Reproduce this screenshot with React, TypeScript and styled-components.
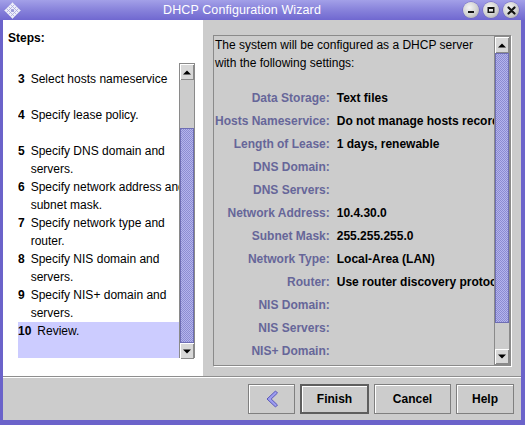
import React from "react";
import styled, { createGlobalStyle } from "styled-components";

const GlobalStyle = createGlobalStyle`
  html, body { margin: 0; padding: 0; background: #6a62c9; }
  body { font-family: "Liberation Sans", Arial, sans-serif; font-size: 12px; color: #000; }
  * { box-sizing: border-box; }
`;

const Window = styled.div`
  width: 525px;
  height: 425px;
  display: flex;
  flex-direction: column;
  background: #6b63ca;
`;

const TitleBar = styled.div`
  height: 20px;
  flex: none;
  display: grid;
  grid-template-columns: 17px 1fr auto;
  align-items: center;
  padding: 0 6px 0 4px;
  background: linear-gradient(#a3a0e8 0%, #8a85dc 45%, #7068d0 100%);
`;

const TitleText = styled.div`
  text-align: center;
  color: #fff;
  font-size: 12.5px;
  line-height: 20px;
  letter-spacing: 0.1px;
`;

const TitleButtons = styled.div`
  display: flex;
  gap: 4px;
`;

const TitleButton = styled.div`
  width: 16px;
  height: 16px;
  border-radius: 50%;
  background: radial-gradient(circle at 40% 35%, #f4f4f4 0%, #d0d0d0 55%, #9a9a9a 100%);
  box-shadow: 0 0 0 0.5px #6660b8;
  display: flex;
  align-items: center;
  justify-content: center;
`;

const Frame = styled.div`
  flex: 1;
  display: flex;
  flex-direction: column;
  padding: 0 4px 5px 3px;
  min-height: 0;
`;

const Body = styled.div`
  flex: 1;
  display: flex;
  flex-direction: column;
  background: #cccccc;
  min-width: 0;
`;

const Main = styled.div`
  height: 356px;
  flex: none;
  display: flex;
`;

const LeftPanel = styled.div`
  width: 200px;
  flex: none;
  background: #ffffff;
  padding: 10px 0 0 5px;
  display: flex;
  flex-direction: column;
`;

const StepsLabel = styled.div`
  font-weight: bold;
  line-height: 16px;
  height: 16px;
`;

const ListBox = styled.div`
  margin: 17px 0 0 10px;
  width: 177px;
  height: 295px;
  display: flex;
`;

const ListViewport = styled.div`
  flex: 1;
  min-width: 0;
  overflow: hidden;
  display: flex;
  flex-direction: column;
  justify-content: flex-end;
`;

const Item = styled.div<{ $selected?: boolean }>`
  min-height: 36px;
  flex: none;
  display: flex;
  background: ${(p) => (p.$selected ? "#ccccff" : "transparent")};
  line-height: 18px;
`;

const ItemNum = styled.span`
  font-weight: bold;
  margin-right: 6px;
  white-space: nowrap;
`;

const ItemText = styled.div`
  white-space: nowrap;
`;

const Line = styled.div`
  height: 18px;
`;

const RightPanel = styled.div`
  flex: 1;
  min-width: 0;
  display: flex;
  padding: 15px 10px 10px 10px;
`;

const TextArea = styled.div`
  flex: 1;
  min-width: 0;
  display: flex;
  border: 1px solid #8a8a8a;
  box-shadow: 1px 1px 0 #ffffff;
`;

const Content = styled.div`
  flex: 1;
  min-width: 0;
  overflow: hidden;
  padding-left: 1px;
`;

const Intro = styled.div`
  line-height: 18px;
  white-space: nowrap;
`;

const Settings = styled.div`
  margin-top: 14px;
  display: grid;
  grid-template-columns: max-content max-content;
  grid-auto-rows: 23px;
  column-gap: 7px;
  align-items: center;
`;

const SetLabel = styled.div`
  font-weight: bold;
  color: #666699;
  text-align: right;
  white-space: nowrap;
`;

const SetValue = styled.div`
  font-weight: bold;
  white-space: nowrap;
`;

const ScrollBar = styled.div`
  width: 16px;
  flex: none;
  display: flex;
  flex-direction: column;
  background: #cccccc;
  border: 1px solid #8a8a8a;
`;

const ArrowButton = styled.div<{ $h?: number }>`
  height: ${(p) => p.$h ?? 16}px;
  flex: none;
  display: flex;
  align-items: center;
  justify-content: center;
  background: #d8d8d8;
  box-shadow: inset 1px 1px 0 #ffffff, inset -1px -1px 0 #8a8a8a;
`;

const TrackGap = styled.div<{ $h: number }>`
  height: ${(p) => p.$h}px;
  flex: none;
  background: #cccccc;
`;

const Thumb = styled.div<{ $h: number }>`
  height: ${(p) => p.$h}px;
  flex: none;
  border: 1px solid #6e6eb4;
  background: repeating-conic-gradient(#b4b4ec 0 25%, #8c8cd2 0 50%) 0 0 / 2px 2px;
`;

const TrackRest = styled.div`
  flex: 1;
  background: #cccccc;
`;

const Separator = styled.div`
  height: 2px;
  flex: none;
  border-top: 1px solid #8e8e8e;
  background: #ffffff;
`;

const Footer = styled.div`
  flex: 1;
  display: flex;
  justify-content: flex-end;
  align-items: center;
  gap: 5px;
  padding-right: 7px;
`;

const Button = styled.button<{ $w: number; $default?: boolean }>`
  width: ${(p) => p.$w}px;
  height: 30px;
  padding: 0;
  display: flex;
  align-items: center;
  justify-content: center;
  font-family: "Liberation Sans", Arial, sans-serif;
  font-size: 12px;
  font-weight: bold;
  color: #000;
  background: #cccccc;
  border: ${(p) => (p.$default ? "2px solid #5e5e5e" : "1px solid #7f7f7f")};
  box-shadow: inset 1px 1px 0 #ffffff;
`;

const Arrow = ({ up }: { up?: boolean }) => (
  <svg width="8" height="5" viewBox="0 0 8 5">
    <polygon points={up ? "0,4.5 8,4.5 4,0.5" : "0,0.5 8,0.5 4,4.5"} fill="#000" />
  </svg>
);

const Scroller = ({ gap, thumb, tailH }: { gap: number; thumb: number; tailH?: number }) => (
  <ScrollBar>
    <ArrowButton>
      <Arrow up />
    </ArrowButton>
    <TrackGap $h={gap} />
    <Thumb $h={thumb} />
    <TrackRest />
    <ArrowButton $h={tailH}>
      <Arrow />
    </ArrowButton>
  </ScrollBar>
);

const steps: { n: string; lines: string[] }[] = [
  { n: "3", lines: ["Select hosts nameservice"] },
  { n: "4", lines: ["Specify lease policy."] },
  { n: "5", lines: ["Specify DNS domain and", "servers."] },
  { n: "6", lines: ["Specify network address and", "subnet mask."] },
  { n: "7", lines: ["Specify network type and", "router."] },
  { n: "8", lines: ["Specify NIS domain and", "servers."] },
  { n: "9", lines: ["Specify NIS+ domain and", "servers."] },
  { n: "10", lines: ["Review."] },
];

const settings: [string, string][] = [
  ["Data Storage:", "Text files"],
  ["Hosts Nameservice:", "Do not manage hosts records"],
  ["Length of Lease:", "1 days, renewable"],
  ["DNS Domain:", ""],
  ["DNS Servers:", ""],
  ["Network Address:", "10.4.30.0"],
  ["Subnet Mask:", "255.255.255.0"],
  ["Network Type:", "Local-Area (LAN)"],
  ["Router:", "Use router discovery protocol"],
  ["NIS Domain:", ""],
  ["NIS Servers:", ""],
  ["NIS+ Domain:", ""],
];

const WindowIcon = () => (
  <svg width="17" height="17" viewBox="0 0 17 17">
    <polygon points="8.5,0.5 16.5,8.5 8.5,16.5 0.5,8.5" fill="#eeeefa" stroke="#c8c8ec" />
    <g stroke="#a8a8dc" strokeWidth="0.8">
      <line x1="4.5" y1="4.5" x2="12.5" y2="12.5" />
      <line x1="12.5" y1="4.5" x2="4.5" y2="12.5" />
      <line x1="6.5" y1="2.5" x2="14.5" y2="10.5" />
      <line x1="2.5" y1="6.5" x2="10.5" y2="14.5" />
      <line x1="10.5" y1="2.5" x2="2.5" y2="10.5" />
      <line x1="14.5" y1="6.5" x2="6.5" y2="14.5" />
    </g>
    <circle cx="8.5" cy="8.5" r="1.6" fill="#9a9ad8" />
  </svg>
);

export default function App() {
  return (
    <>
      <GlobalStyle />
      <Window>
        <TitleBar>
          <WindowIcon />
          <TitleText>DHCP Configuration Wizard</TitleText>
          <TitleButtons>
            <TitleButton>
              <svg width="8" height="8" viewBox="0 0 8 8">
                <rect x="1" y="5" width="6" height="2" fill="#111" />
              </svg>
            </TitleButton>
            <TitleButton>
              <svg width="8" height="8" viewBox="0 0 8 8">
                <rect x="1.25" y="1.75" width="5.5" height="4.5" fill="none" stroke="#111" strokeWidth="1.5" />
                <rect x="1" y="1" width="6" height="2" fill="#111" />
              </svg>
            </TitleButton>
            <TitleButton>
              <svg width="9" height="9" viewBox="0 0 9 9">
                <path d="M1.5 1.5 L7.5 7.5 M7.5 1.5 L1.5 7.5" stroke="#111" strokeWidth="2.2" strokeLinecap="round" />
              </svg>
            </TitleButton>
          </TitleButtons>
        </TitleBar>
        <Frame>
          <Body>
            <Main>
              <LeftPanel>
                <StepsLabel>Steps:</StepsLabel>
                <ListBox>
                  <ListViewport>
                    {steps.map((s) => (
                      <Item key={s.n} $selected={s.n === "10"}>
                        <ItemNum>{s.n}</ItemNum>
                        <ItemText>
                          {s.lines.map((l) => (
                            <Line key={l}>{l}</Line>
                          ))}
                        </ItemText>
                      </Item>
                    ))}
                  </ListViewport>
                  <Scroller gap={48} thumb={215} />
                </ListBox>
              </LeftPanel>
              <RightPanel>
                <TextArea>
                  <Content>
                    <Intro>The system will be configured as a DHCP server</Intro>
                    <Intro>with the following settings:</Intro>
                    <Settings>
                      {settings.map(([k, v]) => (
                        <React.Fragment key={k}>
                          <SetLabel>{k}</SetLabel>
                          <SetValue>{v}</SetValue>
                        </React.Fragment>
                      ))}
                    </Settings>
                  </Content>
                  <Scroller gap={0} thumb={270} tailH={15} />
                </TextArea>
              </RightPanel>
            </Main>
            <Separator />
            <Footer>
              <Button $w={47} aria-label="Back">
                <svg width="14" height="18" viewBox="0 0 14 18">
                  <path d="M10.5 1 L2 9 L10.5 17 L12.5 15 L6.2 9 L12.5 3 Z" fill="#9c9cf0" stroke="#5a58b8" strokeWidth="1" strokeLinejoin="miter" />
                </svg>
              </Button>
              <Button $w={69} $default>Finish</Button>
              <Button $w={77}>Cancel</Button>
              <Button $w={58}>Help</Button>
            </Footer>
          </Body>
        </Frame>
      </Window>
    </>
  );
}
